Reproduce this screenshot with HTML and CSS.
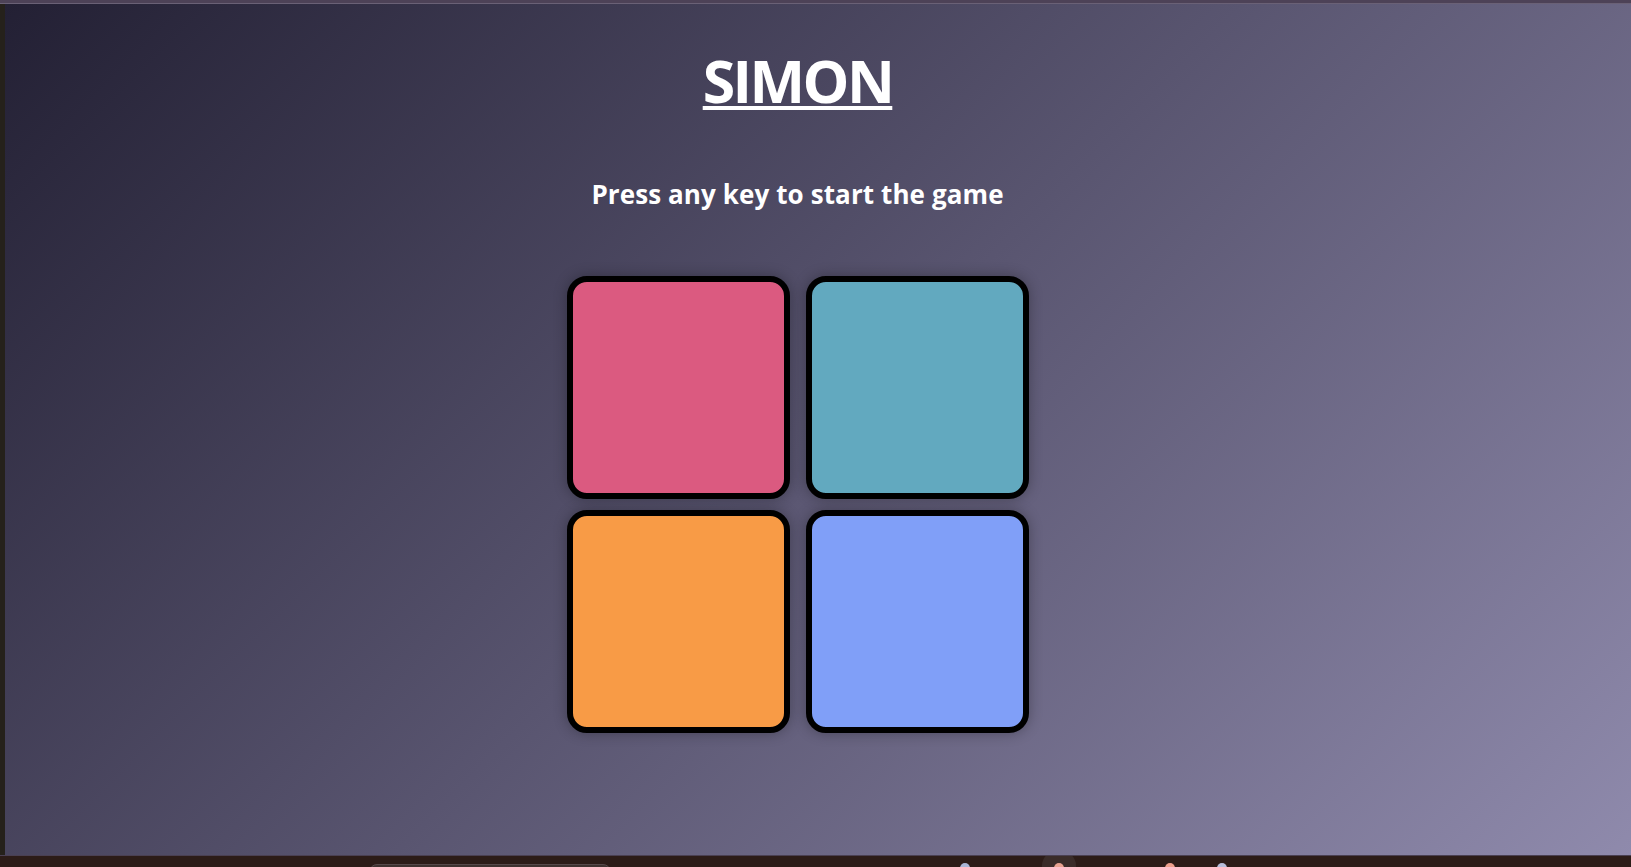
FILE: index.html
```html
<!DOCTYPE html>
<html lang="en">
<head>
<meta charset="utf-8">
<title>Simon Game</title>
<link rel="stylesheet" href="styles.css">
</head>
<body>
<div class="frame">
  <div class="topbar"></div>
  <div class="middle">
    <div class="leftstrip"></div>
    <main class="page">
      <h1 class="title">SIMON</h1>
      <h2 class="level-title">Press any key to start the game</h2>
      <div class="board">
        <div class="btn red"></div>
        <div class="btn green"></div>
        <div class="btn yellow"></div>
        <div class="btn blue"></div>
      </div>
    </main>
  </div>
  <div class="taskbar">
    <div class="task-search"></div>
    <div class="task-icon ti1"></div>
    <div class="task-icon ti2 active"></div>
    <div class="task-icon ti3"></div>
    <div class="task-icon ti4"></div>
  </div>
</div>
</body>
</html>
```
FILE: styles.css
```css
html, body {
  margin: 0;
  padding: 0;
  height: 100%;
  overflow: hidden;
}

body {
  font-family: "Open Sans", "Noto Sans", sans-serif;
  background: #25211b;
}

.frame {
  display: flex;
  flex-direction: column;
  height: 100vh;
}

.topbar {
  height: 3px;
  background: #4d4257;
  border-bottom: 1px solid #6a6176;
  flex: none;
}

.middle {
  flex: 1;
  display: flex;
  min-height: 0;
}

.leftstrip {
  width: 5px;
  flex: none;
  background: #25211b;
}

.page {
  flex: 1;
  background: linear-gradient(135deg, #232034 0%, #8f8aac 100%);
  padding-right: 41px;
  text-align: center;
  color: #ffffff;
  display: flex;
  flex-direction: column;
  align-items: center;
}

.title {
  margin: 46px 0 0;
  font-size: 59px;
  line-height: 60px;
  font-weight: 700;
  letter-spacing: -2.6px;
  text-decoration: underline;
  text-decoration-thickness: 4px;
  text-underline-offset: 3px;
}

.level-title {
  margin: 69px 0 0;
  font-size: 26px;
  line-height: 30px;
  font-weight: 700;
  letter-spacing: 0.1px;
}

.board {
  margin-top: 67px;
  display: grid;
  grid-template-columns: 223px 223px;
  grid-template-rows: 223px 223px;
  column-gap: 16px;
  row-gap: 11px;
}

.btn {
  box-sizing: border-box;
  border: 6.5px solid #000000;
  border-radius: 20px;
  box-shadow: 0 0 14px rgba(0, 0, 0, 0.3);
}

.red { background: #db5a80; }
.green { background: #62a9bf; }
.yellow { background: #f89b46; }
.blue { background: #809ff8; }

.taskbar {
  height: 11px;
  flex: none;
  background: #2c1c18;
  border-top: 1px solid #4a4052;
  position: relative;
  overflow: hidden;
}

.task-search {
  position: absolute;
  left: 369px;
  top: 8px;
  width: 240px;
  height: 30px;
  border-radius: 8px;
  background: #3e3230;
  border: 1px solid #56494a;
}

.task-icon {
  position: absolute;
  top: 7px;
  width: 10px;
  height: 10px;
  border-radius: 50%;
}

.ti1 { left: 960px; background: #a9b6d6; }
.ti2 { left: 1054px; background: #e9a290; }
.ti2.active { box-shadow: 0 0 0 12px #3a2c29; }
.ti3 { left: 1165px; background: #ee9f8c; }
.ti4 { left: 1217px; background: #b7bedb; }
```
